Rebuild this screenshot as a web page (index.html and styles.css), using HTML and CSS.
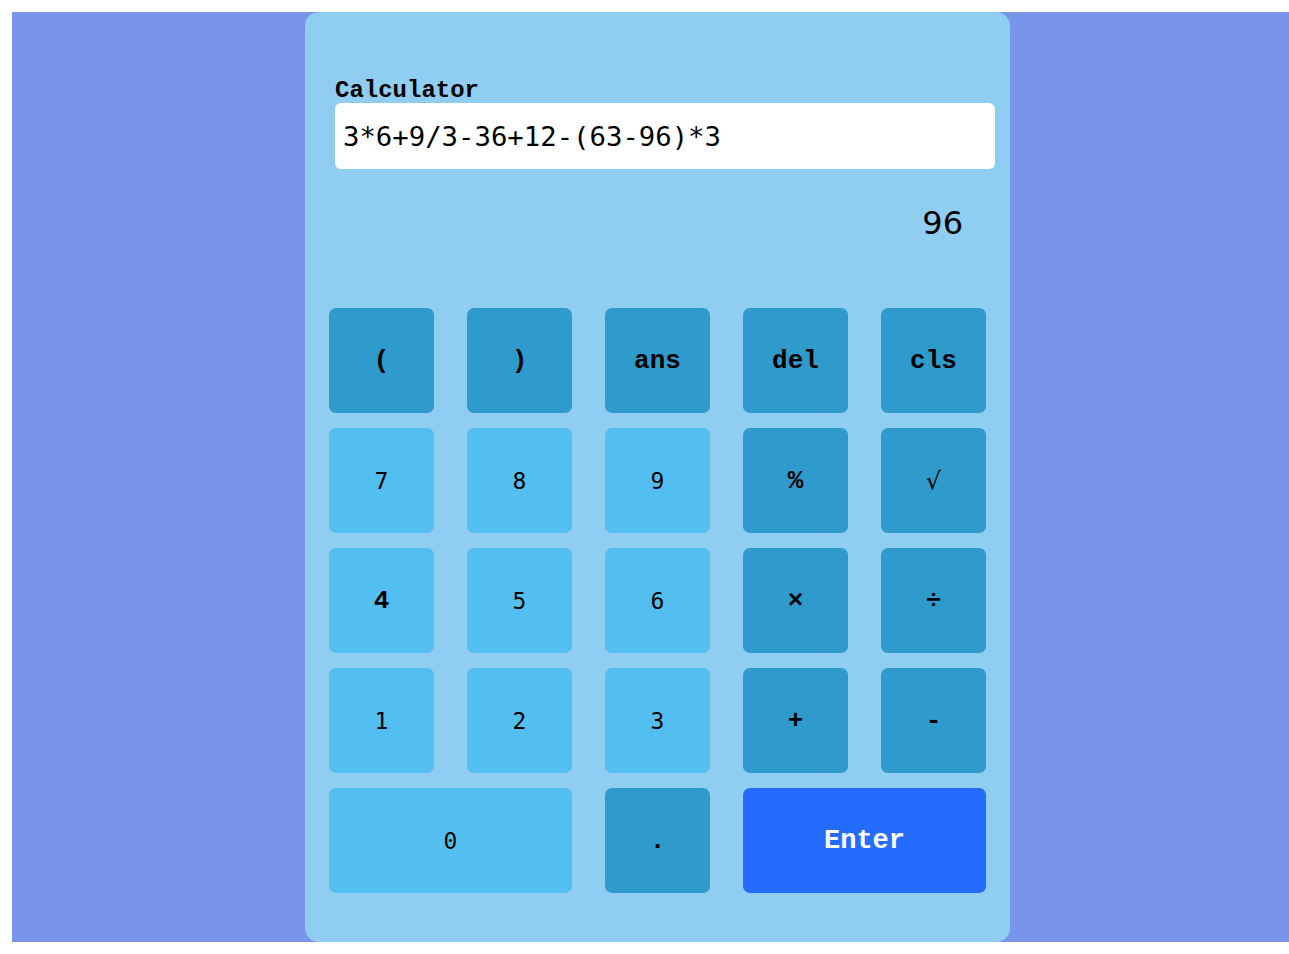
FILE: index.html
```html
<!DOCTYPE html>
<html>
<head>
<meta charset="utf-8">
<link rel="stylesheet" href="styles.css">
</head>
<body>
<main class="page">
  <section class="calc">
    <label class="calc-label" for="expr">Calculator</label>
    <input class="calc-input" id="expr" type="text" value="3*6+9/3-36+12-(63-96)*3">
    <div class="calc-result">96</div>
    <div class="keys">
      <button class="key op">(</button>
      <button class="key op">)</button>
      <button class="key op">ans</button>
      <button class="key op">del</button>
      <button class="key op">cls</button>
      <button class="key num">7</button>
      <button class="key num">8</button>
      <button class="key num">9</button>
      <button class="key op">%</button>
      <button class="key op sqrt">√</button>
      <button class="key num four">4</button>
      <button class="key num">5</button>
      <button class="key num">6</button>
      <button class="key op">×</button>
      <button class="key op">÷</button>
      <button class="key num">1</button>
      <button class="key num">2</button>
      <button class="key num">3</button>
      <button class="key op">+</button>
      <button class="key op">-</button>
      <button class="key num wide">0</button>
      <button class="key op">.</button>
      <button class="key enter wide">Enter</button>
    </div>
  </section>
</main>
</body>
</html>
```

FILE: styles.css
```css
html, body {
  margin: 0;
  padding: 0;
  background: #ffffff;
  overflow: hidden;
}
body {
  padding: 12px 0 0 12px;
}
.page {
  background: #7895eb;
  height: 930px;
  display: flex;
}
.calc {
  margin-left: 293px;
  width: 705px;
  height: 930px;
  box-sizing: border-box;
  background: #8fcdf1;
  border-radius: 14px;
  padding: 67px 24px 0 24px;
  display: flex;
  flex-direction: column;
}
.calc-label {
  display: block;
  margin-left: 6px;
  font-family: "Courier New", Courier, "Nimbus Mono PS", "Nimbus Mono L", FreeMono, "Liberation Mono", monospace;
  font-weight: bold;
  font-size: 24px;
  line-height: 24px;
  color: #000;
}
.calc-input {
  display: block;
  margin-left: 6px;
  width: 660px;
  height: 66px;
  box-sizing: border-box;
  border: none;
  border-radius: 6px;
  background: #ffffff;
  padding: 0 8px;
  font-family: "DejaVu Sans Mono", monospace;
  font-size: 27.3px;
  color: #000;
  outline: none;
}
.calc-result {
  margin-top: 35px;
  padding-right: 23px;
  text-align: right;
  font-family: "DejaVu Sans", sans-serif;
  font-size: 32px;
  line-height: 38px;
  color: #000;
}
.keys {
  margin-top: 66px;
  display: grid;
  grid-template-columns: repeat(5, 105px);
  grid-auto-rows: 105px;
  column-gap: 33px;
  row-gap: 15px;
}
.key {
  border: none;
  border-radius: 7px;
  padding: 0;
  margin: 0;
  display: flex;
  align-items: center;
  justify-content: center;
  font-family: "Courier New", Courier, "Nimbus Mono PS", "Nimbus Mono L", FreeMono, "Liberation Mono", monospace;
  font-weight: bold;
  font-size: 26px;
  color: #000;
  cursor: pointer;
}
.key.op {
  background: #2f9bcd;
}
.key.num {
  background: #53bef0;
  font-family: "DejaVu Sans Mono", monospace;
  font-weight: normal;
  font-size: 23px;
}
.key.num.four {
  font-family: "Courier New", Courier, "Nimbus Mono PS", "Nimbus Mono L", FreeMono, "Liberation Mono", monospace;
  font-weight: bold;
  font-size: 26px;
}
.key.sqrt {
  font-family: "DejaVu Serif", serif;
  font-weight: normal;
  font-size: 24px;
}
.key.wide {
  grid-column: span 2;
}
.key.enter {
  background: #236cff;
  color: #ffffff;
  font-size: 27px;
}
```
